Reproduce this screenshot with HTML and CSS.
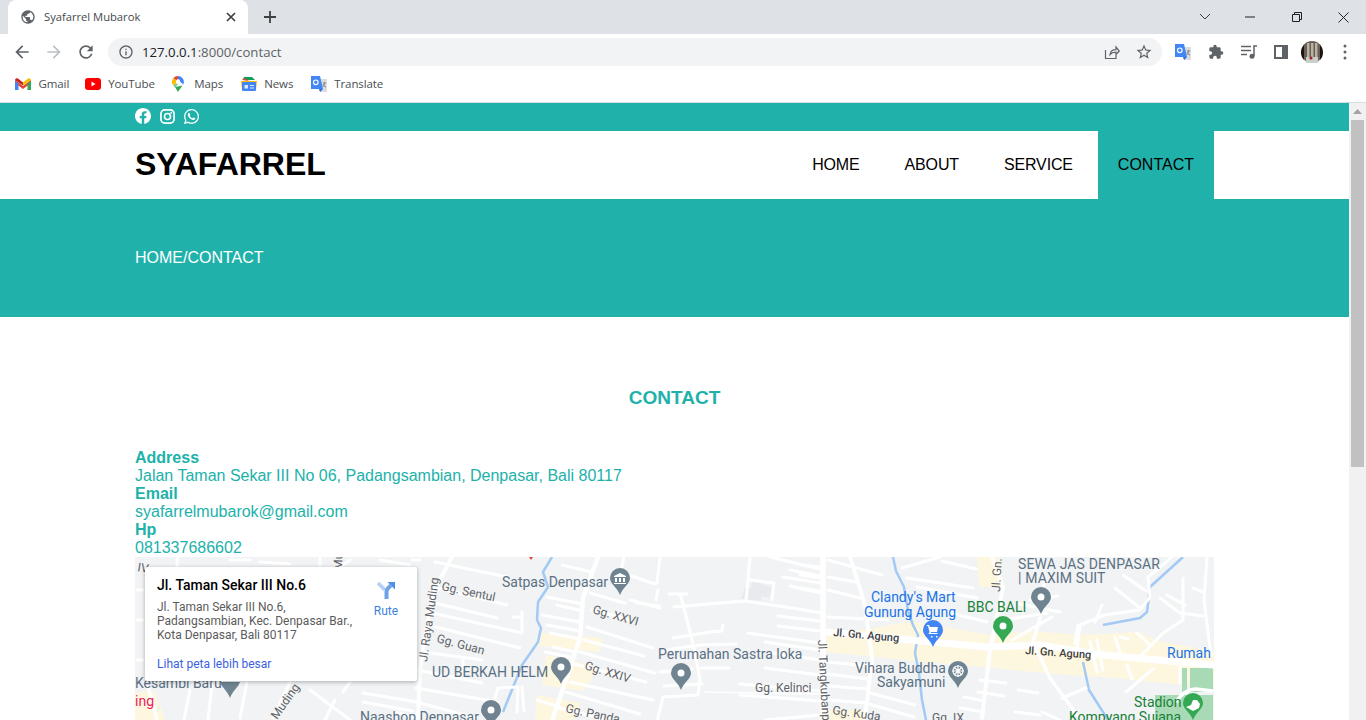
FILE: index.html
```html
<!DOCTYPE html>
<html lang="id">
<head>
<meta charset="utf-8">
<title>Syafarrel Mubarok</title>
<link rel="stylesheet" href="styles.css">
</head>
<body>
<header class="chrome">
  <div class="tabstrip">
    <div class="tab">
      <svg class="tab-fav" viewBox="0 0 24 24" width="16" height="16"><path fill="#5f6368" d="M12 2C6.48 2 2 6.48 2 12s4.48 10 10 10 10-4.48 10-10S17.52 2 12 2zm-1 17.93A8 8 0 014 12c0-.62.08-1.21.21-1.79L9 15v1c0 1.1.9 2 2 2v1.93zm6.9-2.54A2 2 0 0016 16h-1v-3c0-.55-.45-1-1-1H8v-2h2c.55 0 1-.45 1-1V7h2c1.1 0 2-.9 2-2v-.41a8 8 0 012.9 12.8z"/></svg>
      <span class="tab-title">Syafarrel Mubarok</span>
      <svg class="tab-x" viewBox="0 0 10 10" width="10" height="10"><path d="M1 1l8 8M9 1l-8 8" stroke="#3c4043" stroke-width="1.7"/></svg>
    </div>
    <svg class="tab-new" viewBox="0 0 14 14" width="14" height="14"><path d="M7 1v12M1 7h12" stroke="#3c4043" stroke-width="1.8"/></svg>
    <div class="win-controls">
      <svg viewBox="0 0 12 8" width="12" height="8"><path d="M1 1l5 5 5-5" fill="none" stroke="#3c4043" stroke-width="1"/></svg>
      <svg class="wc-min" viewBox="0 0 10 2" width="10" height="2"><path d="M0 1h10" stroke="#202124" stroke-width="1"/></svg>
      <svg class="wc-max" viewBox="0 0 10 10" width="10" height="10"><path d="M.5 2.5h7v7h-7zM2.5 2.5V.5h7v7h-2" fill="none" stroke="#202124" stroke-width="1"/></svg>
      <svg class="wc-close" viewBox="0 0 11 11" width="11" height="11"><path d="M.5.5l10 10M10.500.5l-10 10" stroke="#202124" stroke-width="1"/></svg>
    </div>
  </div>
  <div class="toolbar">
    <svg viewBox="0 0 24 24" width="20" height="20" class="tb-back"><path fill="#5f6368" d="M20 11H7.830l5.590-5.590L12 4l-8 8 8 8 1.410-1.410L7.830 13H20v-2z"/></svg>
    <svg viewBox="0 0 24 24" width="20" height="20" class="tb-fwd"><path fill="#bdc1c6" d="M4 11h12.170l-5.590-5.590L12 4l8 8-8 8-1.410-1.410L16.170 13H4v-2z"/></svg>
    <svg viewBox="0 0 24 24" width="20" height="20" class="tb-reload"><path fill="#5f6368" d="M17.650 6.350A7.958 7.958 0 0012 4c-4.420 0-7.990 3.580-7.990 8s3.570 8 7.990 8c3.730 0 6.840-2.550 7.730-6h-2.080A5.990 5.990 0 0112 18c-3.310 0-6-2.690-6-6s2.690-6 6-6c1.660 0 3.140.690 4.220 1.780L13 11h7V4l-2.350 2.350z"/></svg>
    <div class="omnibox">
      <svg viewBox="0 0 24 24" width="16" height="16"><path fill="#5f6368" d="M11 7h2v2h-2zm0 4h2v6h-2zm1-9C6.480 2 2 6.480 2 12s4.480 10 10 10 10-4.480 10-10S17.520 2 12 2zm0 18c-4.410 0-8-3.590-8-8s3.590-8 8-8 8 3.590 8 8-3.590 8-8 8z"/></svg>
      <span class="url"><span class="url-host">127.0.0.1</span>:8000/contact</span>
      <svg class="omni-share" viewBox="0 0 16 16" width="16" height="16"><path d="M1.500 6v8.500H12V11M6 10.500c.5-3 3-4.800 6-4.800V3l3.300 4-3.300 3.500V8.200c-2.500 0-4.500.6-6 2.300z" fill="none" stroke="#5f6368" stroke-width="1.200"/></svg>
      <svg class="omni-star" viewBox="0 0 24 24" width="18" height="18"><path fill="#5f6368" d="M22 9.240l-7.190-.620L12 2 9.190 8.630 2 9.240l5.460 4.730L5.820 21 12 17.270 18.180 21l-1.630-7.030L22 9.240zM12 15.400l-3.760 2.270 1-4.280-3.320-2.880 4.380-.380L12 6.100l1.710 4.040 4.380.380-3.320 2.880 1 4.280L12 15.400z"/></svg>
    </div>
    <div class="ext-icons">
      <svg viewBox="0 0 16 16" width="16" height="16"><path fill="#dadce0" d="M7 3h9v13H9z"/><path fill="#4285f4" d="M0 0h9l3 13H0z"/><path fill="#3367d6" d="M8 13h4l-3 3z"/><circle cx="4.800" cy="6.300" r="2.300" fill="none" stroke="#fff" stroke-width="1.100"/><path d="M12 7h3M13.500 6v1c0 2-1 3-2 4M12 8c.5 1.500 1.500 2.500 3 3" stroke="#80868b" fill="none"/></svg>
      <svg viewBox="0 0 24 24" width="16" height="16"><path fill="#5f6368" d="M20.500 11H19V7c0-1.100-.9-2-2-2h-4V3.500a2.500 2.500 0 00-5 0V5H4c-1.100 0-1.990.9-1.990 2v3.800H3.500c1.490 0 2.700 1.210 2.700 2.700s-1.210 2.700-2.700 2.700H2V20c0 1.100.9 2 2 2h3.800v-1.500c0-1.490 1.210-2.700 2.700-2.700 1.490 0 2.700 1.210 2.700 2.700V22H17c1.100 0 2-.9 2-2v-4h1.500a2.500 2.500 0 000-5z"/></svg>
      <svg viewBox="0 0 16 14" width="16" height="14"><path d="M0 1.500h10M0 5.500h10M0 9.500h6" stroke="#5f6368" stroke-width="1.400"/><circle cx="11" cy="11.300" r="2.500" fill="#5f6368"/><path d="M13 11V1h3" stroke="#5f6368" stroke-width="1.500" fill="none"/></svg>
      <svg viewBox="0 0 14 14" width="14" height="14"><path fill="#5f6368" d="M0 0h14v14H0z"/><path fill="#fff" d="M2 2h6v10H2z"/></svg>
      <svg class="avatar" viewBox="0 0 22 22" width="22" height="22"><circle cx="11" cy="11" r="11" fill="#6b5d52"/><path d="M6 2h2.500v15H6zM10 2h2.500v15H10zM14 2h2.500v15H14z" fill="#b9b2a6"/><path d="M0 11a11 11 0 003 8V4a11 11 0 00-3 7zM19 4v15a11 11 0 000-15z" fill="#1c1413"/><path d="M5 16h12v6H5z" fill="#c9cfc9"/><circle cx="10" cy="17" r="1.600" fill="#a3232e"/></svg>
      <svg class="kebab" viewBox="0 0 4 16" width="4" height="16"><circle cx="2" cy="2" r="1.500" fill="#5f6368"/><circle cx="2" cy="8" r="1.500" fill="#5f6368"/><circle cx="2" cy="14" r="1.500" fill="#5f6368"/></svg>
    </div>
  </div>
  <nav class="bookmarks">
    <a class="bm bm-gmail"><svg viewBox="0 0 16 12" width="16" height="12"><path fill="#ea4335" d="M0 2l8 6 8-6v3l-8 6-8-6z"/><path fill="#4285f4" d="M0 3v9h3.500V5.500z"/><path fill="#34a853" d="M12.500 5.500V12H16V3z"/><path fill="#c5221f" d="M0 2a2 2 0 013-1.500L8 4.500v3L0 2z"/><path fill="#fbbc04" d="M16 2a2 2 0 00-3-1.500L8 4.500v3L16 2z"/></svg>Gmail</a>
    <a class="bm"><svg viewBox="0 0 16 12" width="16" height="12"><rect width="16" height="12" rx="3" fill="#f00"/><path fill="#fff" d="M6.500 3.500v5l4-2.500z"/></svg>YouTube</a>
    <a class="bm bm-maps"><svg viewBox="0 0 12 16" width="12" height="16"><path fill="#34a853" d="M3 11l3 5c1-2 3-4 4.500-6.500z"/><path fill="#4285f4" d="M6 0a6 6 0 015.300 8.500L8 5.500A2.300 2.300 0 006 3z"/><path fill="#ea4335" d="M6 0a6 6 0 00-4.600 2.100l2.900 2.300A2.300 2.300 0 016 3z"/><path fill="#fbbc04" d="M1.400 2.100A6 6 0 001.300 9.500L4.500 7a2.300 2.300 0 01-.2-2.600z"/><path fill="#0f9d58" d="M1.300 9.500L3 11.500l5-6z" opacity=".6"/><circle cx="6" cy="6" r="2.100" fill="#fff"/></svg>Maps</a>
    <a class="bm"><svg viewBox="0 0 16 14" width="16" height="14"><path fill="#0f9d58" d="M2 3l1-3h8l3 3z"/><path fill="#ea4335" d="M1 3l2-2 5 3z"/><path fill="#fbbc04" d="M0 4h16l-1 9H1z"/><rect x="1" y="5" width="14" height="9" rx="1" fill="#4285f4"/><path d="M3.500 8h3.500v3.500h-3.500zM9 8h4v1H9zM9 10.500h4v1H9z" fill="#dce8fb"/></svg>News</a>
    <a class="bm"><svg viewBox="0 0 16 16" width="16" height="16"><path fill="#dadce0" d="M7 3h9v13H9z"/><path fill="#4285f4" d="M0 0h9l3 13H0z"/><path fill="#3367d6" d="M8 13h4l-3 3z"/><circle cx="4.800" cy="6.300" r="2.300" fill="none" stroke="#fff" stroke-width="1.100"/><path d="M12 7h3M13.500 6v1c0 2-1 3-2 4M12 8c.5 1.500 1.500 2.500 3 3" stroke="#80868b" fill="none"/></svg>Translate</a>
  </nav>
</header>

<div class="viewport">
  <main class="page">
    <div class="topbar">
      <div class="container social">
        <svg viewBox="0 0 24 24" width="16" height="16"><path fill="#fff" d="M24 12.073c0-6.627-5.373-12-12-12s-12 5.373-12 12c0 5.990 4.388 10.954 10.125 11.854v-8.385H7.078v-3.470h3.047V9.430c0-3.007 1.792-4.669 4.533-4.669 1.312 0 2.686.235 2.686.235v2.953H15.830c-1.491 0-1.956.925-1.956 1.874v2.250h3.328l-.532 3.470h-2.796v8.385C19.612 23.027 24 18.062 24 12.073z"/></svg>
        <svg viewBox="0 0 16 16" width="15" height="15"><rect x="1" y="1" width="14" height="14" rx="4" fill="none" stroke="#fff" stroke-width="1.800"/><circle cx="8" cy="8" r="3.200" fill="none" stroke="#fff" stroke-width="1.700"/><circle cx="12" cy="4" r="1" fill="#fff"/></svg>
        <svg viewBox="0 0 24 24" width="15" height="15"><path fill="#fff" d="M17.472 14.382c-.297-.149-1.758-.867-2.030-.967-.273-.099-.471-.148-.670.150-.197.297-.767.966-.940 1.164-.173.199-.347.223-.644.075-.297-.150-1.255-.463-2.390-1.475-.883-.788-1.480-1.761-1.653-2.059-.173-.297-.018-.458.130-.606.134-.133.298-.347.446-.520.149-.174.198-.298.298-.497.099-.198.050-.371-.025-.520-.075-.149-.669-1.612-.916-2.207-.242-.579-.487-.5-.669-.510-.173-.008-.371-.010-.570-.010-.198 0-.520.074-.792.372-.272.297-1.040 1.016-1.040 2.479 0 1.462 1.065 2.875 1.213 3.074.149.198 2.096 3.200 5.077 4.487.709.306 1.262.489 1.694.625.712.227 1.360.195 1.871.118.571-.085 1.758-.719 2.006-1.413.248-.694.248-1.289.173-1.413-.074-.124-.272-.198-.570-.347m-5.421 7.403h-.004a9.870 9.870 0 01-5.031-1.378l-.361-.214-3.741.982.998-3.648-.235-.374a9.860 9.860 0 01-1.510-5.260c.001-5.450 4.436-9.884 9.888-9.884 2.640 0 5.122 1.030 6.988 2.898a9.825 9.825 0 012.893 6.994c-.003 5.450-4.437 9.884-9.885 9.884m8.413-18.297A11.815 11.815 0 0012.050 0C5.495 0 .160 5.335.157 11.892c0 2.096.547 4.142 1.588 5.945L.057 24l6.305-1.654a11.882 11.882 0 005.683 1.448h.005c6.554 0 11.890-5.335 11.893-11.893a11.821 11.821 0 00-3.480-8.413z"/></svg>
      </div>
    </div>
    <div class="navbar">
      <div class="container nav-inner">
        <div class="logo">SYAFARREL</div>
        <ul class="menu">
          <li><a>HOME</a></li>
          <li><a>ABOUT</a></li>
          <li><a>SERVICE</a></li>
          <li class="active"><a>CONTACT</a></li>
        </ul>
      </div>
    </div>
    <section class="hero"><div class="container">HOME/CONTACT</div></section>
    <section class="container contact">
      <h2 class="contact-title">CONTACT</h2>
      <div class="info">
        <b>Address</b>
        <span>Jalan Taman Sekar III No 06, Padangsambian, Denpasar, Bali 80117</span>
        <b>Email</b>
        <span>syafarrelmubarok@gmail.com</span>
        <b>Hp</b>
        <span>081337686602</span>
      </div>
      <div class="map">
        <svg class="map-svg" viewBox="135 557 1079 163" width="1079" height="163">
          <rect x="135" y="557" width="1079" height="163" fill="#f1f3f4"/>
          <!-- built-up tint -->
          <g fill="#fef7e0">
            <path d="M540 633l63 5-4 14-62-6zM546 655l52 12-14 24-42-6zM537 695l44 8-8 17h-38z"/>
            <path d="M826 632l44-3 40-8 80 14 40-4 50 4 42-2 16-2 20 10 66 12v33l-50-2-60-6-60-4-60-6-70-6-98-10z"/>
            <path d="M977 557h22l6 30-26 0z"/>
            <path d="M135 692h20l10 28h-30zM826 710h40v10h-40z"/>
          </g>
          <path d="M745 587l18 2-2 12-20-2zM752 580l20 8-3 10-18-4z" fill="#e8eaed"/>
          <!-- park -->
          <path d="M1155 695h58v25h-58z" fill="#a8dab5"/>
          <path d="M1182 668h5v24h-5zM1190 668h23v24h-23z" fill="#a8dab5"/>
          <path d="M1176 702c6-9 12-13 20-13l17 2" fill="none" stroke="#fff" stroke-width="3.500"/>
          <!-- water -->
          <g fill="none" stroke="#a3c9f5" stroke-width="2.500" stroke-linejoin="round">
            <path d="M552 557l-9 15 5 15-10 15-1 18 4 8-3 14-16 23-19 47"/>
            <path d="M893 557l3 14 8 16 4 24 5 14 5 10-3 18 4 20 3 27 4 20"/>
            <path d="M1083 662l6 28 19 30"/>
            <path d="M1183 557l-33 30-3 25-7 6-37 7"/>
          </g>
          <!-- minor streets -->
          <g fill="none" stroke="#fff" stroke-width="3" stroke-linecap="round" stroke-linejoin="round">
            <!-- raya muding block -->
            <path d="M435 562l72 15M438 588l69 17M435 603l62 15M432 613l90 20M428 625l92 23M522 612v21M513 617h9M424 652l58 8M463 658v10M417 670l65 13M416 688l82 14M495 698l3-10 20-1-1 25M522 687l2 24M416 702l60 16M420 560l-8 0"/>
            <!-- between muding and main -->
            <path d="M562 565l30 7M547 597l36 7M557 605l26 6M542 615l38 7M547 625l33 6M550 633l30 6M553 647l22 5M545 652l30 6M537 700l23 7"/>
            <path d="M590 593l35 10M625 603l-9-2M592 610l38 10M630 620l-5-2M587 627l66 21M584 640l60 16M580 652l75 21M574 664l72 18M570 682l83 18M566 692l74 22M556 707l50 13"/>
            <!-- museum block -->
            <path d="M624 557l-3 14M623 573l32 11M660 557l-3 26M630 600l30 8M658 590l-2 10M637 603l22 3"/>
            <!-- central estate -->
            <path d="M669 594h14l4 0M674 607l34-3 36-3 42 6 36 6M680 594l4 14 10 40 6 32-2 15-35 2-6 25M673 638l37-6 12-1 1-6M664 650l36-5 36-1M701 668h28M660 672l32-3M664 686l38-2"/>
            <path d="M750 557l-4 44M750 580l24 3-2 17M770 557l50 12M790 570l30 6M783 577l37 6M790 586l30 7M778 616l42 5M778 626l42 5M748 633l72 10M765 642l55 8M772 653l48 7M765 668l55 7M740 684l80 7M740 695l80 6M770 697l50 4M765 720l55-5"/>
            <path d="M704 692l115 2" stroke-width="1.500"/>
            <!-- left of vertical -->
            <path d="M800 565l20 2M800 575l20 3M800 588l20 3"/>
            <!-- clandy block -->
            <path d="M828 560l54 15M828 577l28 5M828 590l32 8M828 617l60 3M902 568l38-11M907 578l66 10M917 587l60 11M947 612l40 10M942 561l34 8M828 662l40 4M828 674l40 5M828 686l40 3M870 693l45 12M862 702l52 15M830 700l36 3M980 680l26 3M978 692l26 4M964 697l20 4M960 708l24 4"/>
            <!-- east block -->
            <path d="M1003 620l44-7M1020 604l40 8M1044 582l-1 22M1030 600l28-4M1012 640l40-23"/>
            <path d="M1077 648l3-23 24-10 36-5 10-13-2-20 17-14 20-18M1115 588l25 20M1123 575l23 16M1102 605l-7 17M1078 625l-3 18M1160 598l20 15 23 3M1167 595l18 10M1183 578v42l-20 13-23 24M1207 557l-3 43 7 55M1193 588l10 4M1137 633l13 12M1090 642l7 30M1097 640l6 30M1115 637l5 15M1120 637l8 2M1127 665l5 14M1126 692l27-23M1180 667v16"/>
            <path d="M1062 698l24-10M1042 712l18 8M1018 690l20 3M1015 712l25 3"/>
            <!-- bottom-left strip -->
            <path d="M247 682l-7 36M290 682l-17 36M350 682l-7 10M363 693l54 9M363 702l50 9M147 683l10 36M190 690l-6 30M212 685l-4 35M310 690l40 30M335 700l-10 20M395 712l22 6M177 557v10M320 557v10M230 560h20M260 562l30 2M350 560l-10 7M380 560l30 5M137 590h6M137 620h6M137 660h6"/>
          </g>
          <!-- major roads -->
          <g fill="none" stroke="#fff" stroke-linecap="round" stroke-linejoin="round">
            <path d="M598 557l-15 41-3 40-27 80" stroke-width="4.500"/>
            <path d="M452 557l-19 35-13 76-2 50" stroke-width="4"/>
            <path d="M823 557v163" stroke-width="5.500"/>
            <path d="M850 557l8 25 7 23 7 53-7 60" stroke-width="4"/>
            <path d="M828 632l82 8 77 7 53-2 63 10 110 10" stroke-width="7"/>
            <path d="M992 557l11 31-13 62-8 68" stroke-width="4"/>
            <path d="M1040 618l-7 24 17 36 27 37" stroke-width="3.500"/>
          </g>
          <!-- labels -->
          <g class="m-label">
            <text x="502" y="587">Satpas Denpasar</text>
            <text x="432" y="677">UD BERKAH HELM</text>
            <text x="360" y="722">Naashop Denpasar</text>
            <text x="658" y="659">Perumahan Sastra loka</text>
            <text class="m-wide" x="1018" y="569">SEWA JAS DENPASAR</text>
            <text class="m-wide" x="1018" y="583">| MAXIM SUIT</text>
            <text x="855" y="673">Vihara Buddha</text>
            <text x="877" y="687">Sakyamuni</text>
            <text x="135" y="688">Kesambi Baru</text>
          </g>
          <g class="m-street">
            <text transform="translate(441 590) rotate(12)">Gg. Sentul</text>
            <text transform="translate(436 642) rotate(15)">Gg. Guan</text>
            <text transform="translate(592 613) rotate(16)">Gg. XXVI</text>
            <text transform="translate(584 669) rotate(17)">Gg. XXIV</text>
            <text transform="translate(565 712) rotate(12)">Gg. Panda</text>
            <text x="755" y="692">Gg. Kelinci</text>
            <text transform="translate(832 714) rotate(8)">Gg. Kuda</text>
            <text x="932" y="722">Gg. IX</text>
            <text transform="translate(427 662) rotate(-82)">Jl. Raya Muding</text>
            <text transform="translate(818 640) rotate(87)">Jl. Tangkubanperahu</text>
            <text transform="translate(277 720) rotate(-55)">Muding</text>
            <text transform="translate(1000 592) rotate(-87)">Jl. Gn.</text>
            <text transform="translate(342 570) rotate(-88)">Muding</text>
            <text transform="translate(137 571) rotate(10)">IV</text>
          </g>
          <g class="m-road">
            <text transform="translate(833 636) rotate(5)">Jl. Gn. Agung</text>
            <text transform="translate(1025 654) rotate(4)">Jl. Gn. Agung</text>
          </g>
          <g class="m-blue">
            <text x="871" y="602">Clandy's Mart</text>
            <text x="864" y="617">Gunung Agung</text>
            <text x="1167" y="658">Rumah</text>
          </g>
          <g class="m-green">
            <text x="967" y="612">BBC BALI</text>
            <text x="1134" y="707">Stadion</text>
            <text x="1069" y="722">Kompyang Sujana</text>
          </g>
          <text class="m-pink" x="135" y="706">ing</text>
          <!-- pins -->
          <g fill="#6f8490">
            <path d="M620 568a10 10 0 0110 10c0 6-7 9-10 17-3-8-10-11-10-17a10 10 0 0110-10z"/>
            <path d="M561 657a10 10 0 0110 10c0 6-7 9-10 17-3-8-10-11-10-17a10 10 0 0110-10z"/>
            <path d="M681 663a10 10 0 0110 10c0 6-7 9-10 17-3-8-10-11-10-17a10 10 0 0110-10z"/>
            <path d="M491 700a10 10 0 0110 10c0 6-7 9-10 17-3-8-10-11-10-17a10 10 0 0110-10z"/>
            <path d="M1041 587a10 10 0 0110 10c0 6-7 9-10 17-3-8-10-11-10-17a10 10 0 0110-10z"/>
            <path d="M958 661a10 10 0 0110 10c0 6-7 9-10 17-3-8-10-11-10-17a10 10 0 0110-10z"/>
            <path d="M220 682h20c-2 6-7 8-10 16-3-8-8-10-10-16z"/>
          </g>
          <path d="M933 620a10 10 0 0110 10c0 6-7 9-10 17-3-8-10-11-10-17a10 10 0 0110-10z" fill="#4285f4"/>
          <path d="M1003 616a10 10 0 0110 10c0 6-7 9-10 17-3-8-10-11-10-17a10 10 0 0110-10z" fill="#34a853"/>
          <path d="M1193 693a10 10 0 0110 10c0 6-7 9-10 17-3-8-10-11-10-17a10 10 0 0110-10z" fill="#34a853"/>
          <g fill="#fff">
            <circle cx="561" cy="667" r="3.500"/><circle cx="681" cy="673" r="3.500"/><circle cx="491" cy="710" r="3.500"/><circle cx="1041" cy="597" r="3.500"/><circle cx="1003" cy="626" r="3.500"/>
            <path d="M620 573l6 3v1h-12v-1zM615 578h2v4h-2zM619 578h2v4h-2zM623 578h2v4h-2zM614 583h12v1h-12z"/>
            <path d="M927 625h2l1 2h8l-1 5h-6l-.5 1h7v1h-9l1-2-1.500-6h-1.500zM931 636h1.500v1.500H931zM936 636h1.500v1.500H936z"/>
            <path d="M1186 707l5-2 2-5 4 0 3 4-1 4-6 3z"/>
          </g>
          <g fill="none" stroke="#fff" stroke-width="1.200"><circle cx="958" cy="671" r="5"/><path d="M958 665v12M952 671h12M954 667l8 8M962 667l-8 8"/></g>
          <path d="M533 557l-2 3-2-3z" fill="#ea4335"/>
        </svg>
        <aside class="place-card">
          <div class="pc-main">
            <div class="pc-text">
              <div class="pc-name">Jl. Taman Sekar III No.6</div>
              <div class="pc-addr">Jl. Taman Sekar III No.6,<br>Padangsambian, Kec. Denpasar Bar.,<br>Kota Denpasar, Bali 80117</div>
            </div>
            <div class="pc-dir">
              <svg viewBox="0 0 18 17" width="18" height="17"><path d="M1 1l7 7" stroke="#b5d0f5" stroke-width="3.500" fill="none"/><path d="M9.500 17V10c0-3 2-4.500 4.500-6.500" stroke="#6ea3ea" stroke-width="4" fill="none"/><path d="M10.500 0H18v7.500z" fill="#4f8fe8"/></svg>
              <span>Rute</span>
            </div>
          </div>
          <a class="pc-link">Lihat peta lebih besar</a>
        </aside>
      </div>
    </section>
  </main>
  <div class="scrollbar">
    <svg viewBox="0 0 9 5" width="9" height="5"><path d="M4.500 0L9 5H0z" fill="#a3a3a3"/></svg>
    <div class="thumb"></div>
  </div>
</div>
</body>
</html>
```
FILE: styles.css
```css
* { box-sizing: border-box; }
html, body { margin: 0; height: 720px; overflow: hidden; background: #fff; }
body { font-family: "Liberation Sans", Arial, sans-serif; display: flex; flex-direction: column; }
ul { list-style: none; margin: 0; padding: 0; }

/* Browser chrome */
.chrome { font-family: "Open Sans", "Noto Sans", sans-serif; flex: none; }
.tabstrip { height: 34px; background: #dee1e6; display: flex; align-items: center; position: relative; padding-left: 8px; }
.tab { width: 240px; height: 34px; background: #fff; border-radius: 8px 8px 0 0; display: flex; align-items: center; padding: 0 12px; }
.tab-fav { flex: none; }
.tab-title { font-size: 11.2px; color: #45494d; margin-left: 8px; flex: 1; white-space: nowrap; padding-bottom: 1px; }
.tab-x { flex: none; }
.tab-new { margin-left: 15px; }
.win-controls { margin-left: auto; display: flex; align-items: center; }
.win-controls svg { display: block; }
.wc-min { margin-left: 34px; }
.wc-max { margin-left: 37px; }
.wc-close { margin-left: 36px; margin-right: 17px; }

.toolbar { height: 33px; padding: 4px 0 1px 12px; background: #fff; display: flex; align-items: center; }
.tb-fwd { margin-left: 12px; }
.tb-reload { margin-left: 12px; }
.omnibox { margin-left: 12px; width: 1054px; height: 28px; border-radius: 14px; background: #f1f3f4; display: flex; align-items: center; padding: 0 9px 0 10px; }
.url { font-size: 13.2px; color: #5f6368; margin-left: 8px; flex: 1; white-space: nowrap; }
.url-host { color: #202124; }
.omni-share { margin-right: 15px; }
.ext-icons { display: flex; align-items: center; margin-left: 13px; }
.ext-icons svg { display: block; margin-right: 17px; flex: none; }
.ext-icons .avatar { margin-left: -4px; margin-right: 20px; }
.ext-icons .kebab { margin-right: 0; }

.bookmarks { height: 36px; padding: 0 0 2px 15px; background: #fff; border-bottom: 1px solid #dadce0; display: flex; align-items: center; }
.bm { font-size: 11.5px; letter-spacing: -.1px; color: #4a4e52; display: flex; align-items: center; gap: 7.5px; margin-right: 17.5px; white-space: nowrap; }
.bm-gmail { margin-right: 15.5px; }
.bm-maps svg { margin-right: 2.5px; }

/* Page */
.viewport { flex: 1; min-height: 0; display: flex; }
.page { flex: 1; min-width: 0; overflow: hidden; }
.container { width: 1079px; margin-left: 135px; }
.topbar { height: 28px; background: #20b2aa; }
.social { display: flex; align-items: center; gap: 9px; height: 100%; padding-bottom: 2px; }
.social svg { display: block; }
.navbar { height: 68px; background: #fff; }
.nav-inner { display: flex; justify-content: space-between; align-items: center; height: 100%; }
.logo { font-size: 32px; font-weight: 700; color: #000; padding-bottom: 2px; }
.menu { display: flex; gap: 5px; height: 100%; }
.menu li { display: flex; }
.menu a { padding: 0 20px; display: flex; align-items: center; font-size: 16px; letter-spacing: -.15px; color: #000; }
.menu .active { background: #20b2aa; }
.menu .active a { letter-spacing: 0; }
.hero { height: 118px; background: #20b2aa; color: #fff; font-size: 16px; display: flex; align-items: center; }
.contact { padding-top: 69px; color: #20b2aa; }
.contact-title { margin: 0 0 40px; font-size: 19px; line-height: 23px; font-weight: 700; text-align: center; }
.info { display: flex; flex-direction: column; font-size: 16px; line-height: 18px; }
.map { position: relative; height: 163px; overflow: hidden; }
.map-svg { display: block; }
.m-label text, .m-blue text, .m-green text, .m-street text, .m-road text, .m-pink { font-family: Roboto, sans-serif; }
.m-label { font-size: 14px; fill: #5b7083; }
.m-label .m-wide { letter-spacing: .13px; }
.m-street { font-size: 12px; fill: #5f6368; }
.m-road { font-size: 11px; font-weight: 500; fill: #3c4043; }
.m-blue { font-size: 14px; fill: #1a73e8; }
.m-green { font-size: 14px; fill: #188038; }
.m-pink { font-size: 14px; fill: #e91e63; }
.place-card { position: absolute; left: 10px; top: 10px; width: 272px; height: 114px; background: #fff; box-shadow: 0 1px 4px rgba(0,0,0,.3); padding: 10px 12px; font-family: Roboto, sans-serif; border-radius: 2px; }
.pc-main { display: flex; height: 79px; }
.pc-text { flex: 1; }
.pc-name { font-size: 14px; font-weight: 500; color: #000; line-height: 17px; }
.pc-addr { font-size: 12px; color: #5b5b5b; line-height: 14px; margin-top: 6px; white-space: nowrap; }
.pc-dir { width: 44px; margin-right: -3px; display: flex; flex-direction: column; align-items: center; gap: 5px; font-size: 12px; line-height: 14px; color: #3a84df; padding-top: 5px; }
.pc-dir svg { display: block; }
.pc-link { display: block; font-size: 12px; color: #3a5fdf; margin-top: 1px; }

/* Scrollbar */
.scrollbar { width: 17px; flex: none; background: #f1f1f1; display: flex; flex-direction: column; align-items: center; padding-top: 6px; }
.scrollbar svg { display: block; }
.thumb { width: 13px; height: 347px; margin-top: 6px; background: #c1c1c1; }
```
